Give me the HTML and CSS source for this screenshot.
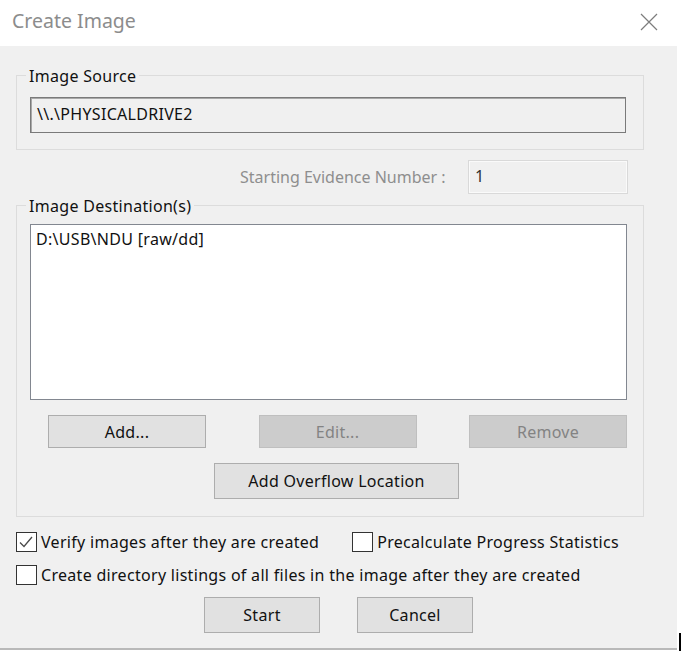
FILE: index.html
```html
<!DOCTYPE html>
<html>
<head>
<meta charset="utf-8">
<link rel="stylesheet" href="styles.css">
</head>
<body>
<div class="window">
  <div class="titlebar">
    <span class="title">Create Image</span>
    <svg class="close" width="18" height="18" viewBox="0 0 18 18"><path d="M1 1L17 17M17 1L1 17" stroke="#7d7d7d" stroke-width="1.2" fill="none"/></svg>
  </div>
  <div class="body">
    <div class="group group-source">
      <div class="legend">Image Source</div>
      <div class="field source-field">\\.\PHYSICALDRIVE2</div>
    </div>
    <div class="evidence-row">
      <span class="evidence-label">Starting Evidence Number :</span>
      <div class="evidence-field">1</div>
    </div>
    <div class="group group-dest">
      <div class="legend">Image Destination(s)</div>
      <div class="listbox">D:\USB\NDU [raw/dd]</div>
      <div class="btn-row">
        <button class="btn">Add...</button>
        <button class="btn disabled">Edit...</button>
        <button class="btn disabled">Remove</button>
      </div>
      <div class="overflow-row">
        <button class="btn overflow">Add Overflow Location</button>
      </div>
    </div>
    <div class="check-row first">
      <label class="check"><span class="box"><svg width="20" height="20" viewBox="0 0 20 20"><path d="M4 10.5L8 14.5L16 5" stroke="#4a4a4a" stroke-width="1.3" fill="none"/></svg></span>Verify images after they are created</label>
      <label class="check precalc"><span class="box"></span>Precalculate Progress Statistics</label>
    </div>
    <div class="check-row">
      <label class="check"><span class="box"></span>Create directory listings of all files in the image after they are created</label>
    </div>
    <div class="action-row">
      <button class="btn action">Start</button>
      <button class="btn action">Cancel</button>
    </div>
  </div>
  <div class="cursor"></div>
</div>
</body>
</html>
```

FILE: styles.css
```css
html, body {
  margin: 0;
  padding: 0;
  background: #ffffff;
}
body {
  font-family: "Noto Sans", "Open Sans", sans-serif;
  font-size: 16px;
  letter-spacing: 0.3px;
  color: #111;
}
.window {
  position: relative;
  width: 681px;
  height: 653px;
}
.titlebar {
  height: 46px;
  display: flex;
  align-items: center;
  justify-content: space-between;
  background: #fff;
  box-sizing: border-box;
  padding: 0 23px 6px 12px;
}
.title {
  font-size: 19.5px;
  color: #8c8c8c;
  letter-spacing: 0;
}
.close {
  display: block;
  margin-top: 4px;
}
.body {
  width: 677px;
  height: 604px;
  background: #f0f0f0;
  border-bottom: 2px solid #b9b9b9;
  padding-top: 29px;
  box-sizing: border-box;
}
.group {
  margin-left: 16px;
  width: 628px;
  border: 1px solid #dcdcdc;
  box-sizing: border-box;
}
.legend {
  width: fit-content;
  margin: -10px 0 0 9px;
  padding: 0 3px;
  background: #f0f0f0;
  line-height: 20px;
  height: 20px;
}
.group-source {
  height: 75px;
}
.source-field {
  margin: 11px 0 0 13px;
  width: 596px;
  height: 36px;
  box-sizing: border-box;
  border: 1px solid #7a7a7a;
  box-shadow: inset 1px 1px 0 #a8a8a8;
  padding-left: 6px;
  line-height: 33px;
}
.evidence-row {
  display: flex;
  align-items: center;
  margin-top: 10px;
  height: 34px;
}
.evidence-label {
  margin-left: 240px;
  width: 228px;
  color: #8e8e8e;
  letter-spacing: 0;
}
.evidence-field {
  width: 160px;
  height: 34px;
  box-sizing: border-box;
  border: 1px solid #d9d9d9;
  box-shadow: inset 0 0 0 1px #fafafa;
  padding-left: 6px;
  line-height: 30px;
  color: #333;
}
.group-dest {
  margin-top: 11px;
  height: 312px;
}
.listbox {
  margin: 8px 0 0 13px;
  width: 597px;
  height: 176px;
  box-sizing: border-box;
  border: 1px solid #828790;
  background: #fff;
  padding: 3px 0 0 5px;
  line-height: 22px;
}
.btn {
  font-family: inherit;
  font-size: inherit;
  letter-spacing: inherit;
  color: #111;
  background: #e1e1e1;
  border: 1px solid #adadad;
  padding: 0;
  margin: 0;
  box-sizing: border-box;
}
.btn.disabled {
  background: #cccccc;
  border-color: #bfbfbf;
  color: #838383;
}
.btn-row {
  display: flex;
  justify-content: space-between;
  margin: 15px 0 0 31px;
  width: 579px;
}
.btn-row .btn {
  width: 158px;
  height: 33px;
}
.overflow-row {
  margin: 15px 0 0 197px;
}
.overflow {
  width: 245px;
  height: 36px;
}
.check-row {
  display: flex;
  align-items: center;
  margin-left: 16px;
  height: 20px;
}
.check-row.first {
  margin-top: 15px;
}
.check-row + .check-row {
  margin-top: 13px;
}
.check {
  display: flex;
  align-items: center;
  gap: 4px;
  white-space: nowrap;
  line-height: 18px;
}
.precalc {
  margin-left: 33px;
}
.box {
  width: 21px;
  height: 20px;
  box-sizing: border-box;
  border: 1px solid #333;
  background: #fff;
  display: flex;
}
.box svg {
  display: block;
  margin: -1px;
}
.action-row {
  display: flex;
  gap: 37px;
  margin: 12px 0 0 204px;
}
.action {
  width: 116px;
  height: 36px;
}
.cursor {
  position: absolute;
  left: 679px;
  top: 633px;
  width: 2px;
  height: 18px;
  background: #000;
}
```
